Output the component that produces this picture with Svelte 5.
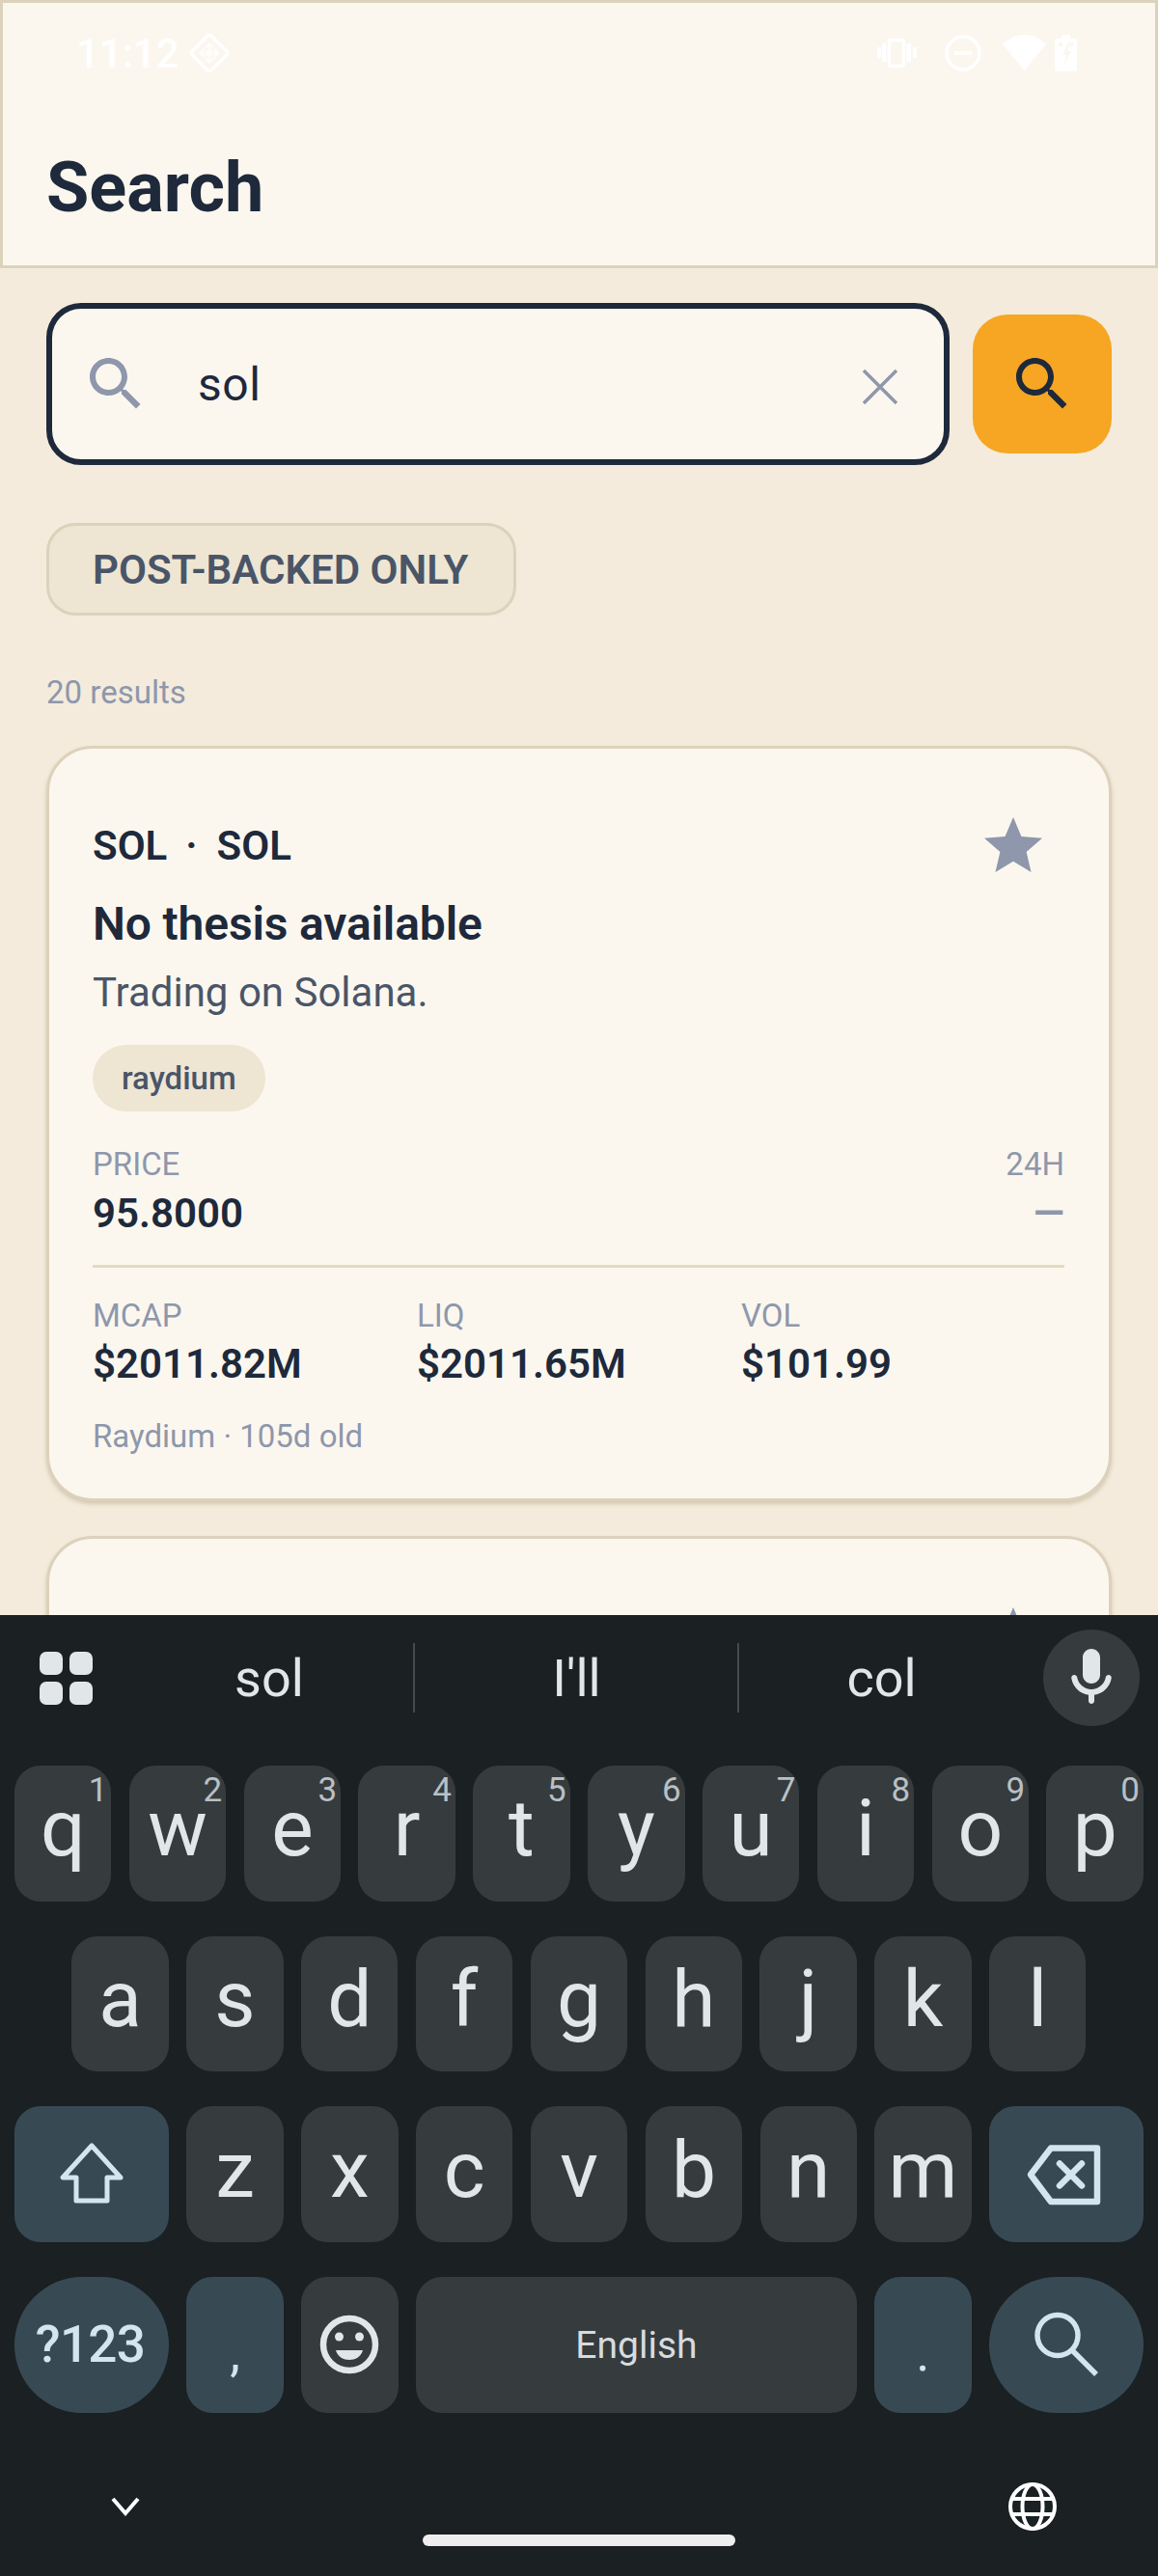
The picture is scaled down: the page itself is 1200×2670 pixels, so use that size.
<script>
  const searchPath = "M15.5 14h-.79l-.28-.27C15.41 12.59 16 11.11 16 9.5 16 5.91 13.09 3 9.5 3S3 5.91 3 9.5 5.91 16 9.5 16c1.61 0 3.09-.59 4.23-1.57l.27.28v.79l5 4.99L20.49 19l-4.99-5zm-6 0C7.01 14 5 11.99 5 9.5S7.01 5 9.5 5 14 7.01 14 9.5 11.99 14 9.5 14z";
  const starPath = "M12 17.27L18.18 21l-1.64-7.03L22 9.24l-7.19-.61L12 2 9.19 8.63 2 9.24l5.46 4.73L5.82 21z";
  const micPath = "M12 14c1.66 0 3-1.34 3-3V5c0-1.66-1.34-3-3-3S9 3.34 9 5v6c0 1.66 1.34 3 3 3zm5.91-3c-.49 0-.9.36-.98.85C16.52 14.2 14.47 16 12 16s-4.52-1.8-4.93-4.15c-.08-.49-.49-.85-.98-.85-.61 0-1.09.54-1 1.14.49 3 2.89 5.35 5.91 5.78V20c0 .55.45 1 1 1s1-.45 1-1v-2.08c3.02-.43 5.42-2.78 5.91-5.78.1-.6-.39-1.14-1-1.14z";

  const topRow = [["q","1"],["w","2"],["e","3"],["r","4"],["t","5"],["y","6"],["u","7"],["i","8"],["o","9"],["p","0"]];
  const midRow = ["a","s","d","f","g","h","j","k","l"];
  const lowRow = ["z","x","c","v","b","n","m"];
  const stats = [["MCAP","$2011.82M"],["LIQ","$2011.65M"],["VOL","$101.99"]];
</script>

<div class="screen">
  <header class="topbar">
    <div class="status">
      <span class="time">11:12</span>
      <svg class="diamond" width="44" height="44" viewBox="0 0 44 44">
        <rect x="8" y="8" width="28" height="28" rx="3" transform="rotate(45 22 22)" fill="none" stroke="#fff" stroke-width="3.5"/>
        <path d="M22 11l5.500 5.500h-11zM16.500 16.500v11l-5.500-5.500zM27.500 16.500l5.500 5.500-5.500 5.500zM16.500 27.500h11L22 33zM22 17l5 5-5 5-5-5z" fill="#fff" opacity=".75"/>
      </svg>
      <span class="status-gap"></span>
      <svg width="42" height="32" viewBox="0 0 42 32">
        <rect x="1" y="10" width="4" height="11" fill="#fff"/>
        <rect x="6" y="6" width="4.500" height="19" fill="#fff"/>
        <rect x="13.500" y="2.500" width="15" height="27" rx="2" fill="none" stroke="#fff" stroke-width="3.500"/>
        <rect x="31.500" y="6" width="4.500" height="19" fill="#fff"/>
        <rect x="38" y="10" width="4" height="11" fill="#fff"/>
      </svg>
      <svg class="dnd" width="38" height="38" viewBox="0 0 38 38">
        <circle cx="19" cy="19" r="17" fill="none" stroke="#fff" stroke-width="3.500"/>
        <rect x="10" y="17" width="18" height="4" fill="#fff"/>
      </svg>
      <svg class="wifi" width="45" height="38" viewBox="0 0 45 38">
        <path d="M0 10C6 4 14 0 22.500 0S39 4 45 10L22.500 37z" fill="#fff"/>
      </svg>
      <svg class="battery" width="23" height="38" viewBox="0 0 23 38">
        <path d="M8 0h8v4h5a2 2 0 0 1 2 2v30a2 2 0 0 1-2 2H2a2 2 0 0 1-2-2V6a2 2 0 0 1 2-2h5z" fill="#fff"/>
        <path d="M4 8h4v4H4zM16 8h3v4h-3zM14 8l-6 13h4l-3 12 8-16h-4l3-9z" fill="#fbf7ef"/>
      </svg>
    </div>
    <h1>Search</h1>
  </header>

  <main class="content">
    <div class="search-row">
      <div class="search-box">
        <svg width="72" height="72" viewBox="0 0 24 24"><path d={searchPath} fill="#8e97ab"/></svg>
        <span class="query">sol</span>
        <svg class="clear" width="48" height="48" viewBox="0 0 48 48">
          <path d="M7 7l34 34M41 7L7 41" stroke="#8e97ab" stroke-width="3.500" fill="none"/>
        </svg>
      </div>
      <button class="go">
        <svg width="72" height="72" viewBox="0 0 24 24"><path d={searchPath} fill="#1e293b"/></svg>
      </button>
    </div>

    <div class="filter">POST-BACKED ONLY</div>
    <p class="count">20 results</p>

    <section class="card">
      <div class="card-head">
        <span class="symbol">SOL<span class="dot">·</span>SOL</span>
        <svg class="star" width="72" height="72" viewBox="0 0 24 24"><path d={starPath} fill="#8e97ab"/></svg>
      </div>
      <h2>No thesis available</h2>
      <p class="desc">Trading on Solana.</p>
      <span class="tag">raydium</span>

      <div class="price-row">
        <div>
          <div class="label">PRICE</div>
          <div class="value">95.8000</div>
        </div>
        <div class="change">
          <div class="label">24H</div>
          <div class="value muted">—</div>
        </div>
      </div>

      <div class="divider"></div>

      <div class="stats">
        {#each stats as [label, value]}
          <div>
            <div class="label">{label}</div>
            <div class="value">{value}</div>
          </div>
        {/each}
      </div>

      <p class="meta">Raydium · 105d old</p>
    </section>

    <section class="card next">
      <div class="card-head">
        <span></span>
        <svg class="star" width="72" height="72" viewBox="0 0 24 24"><path d={starPath} fill="#8e97ab"/></svg>
      </div>
    </section>
  </main>

  <div class="keyboard">
    <div class="strip">
      <div class="apps"><i></i><i></i><i></i><i></i></div>
      <div class="suggestion">sol</div>
      <div class="suggestion sep">I'll</div>
      <div class="suggestion sep">col</div>
      <div class="mic">
        <svg width="72" height="72" viewBox="0 0 24 24"><path d={micPath} fill="#e2e6e9"/></svg>
      </div>
    </div>

    <div class="rows">
      <div class="row">
        {#each topRow as [ch, hint]}
          <div class="key letter">{ch}<sup>{hint}</sup></div>
        {/each}
      </div>
      <div class="row inset">
        {#each midRow as ch}
          <div class="key letter">{ch}</div>
        {/each}
      </div>
      <div class="row">
        <div class="key wide accent">
          <svg width="72" height="72" viewBox="0 0 72 72">
            <path d="M36 6L6 39H20V63H52V39H66Z" fill="none" stroke="#d3e5ef" stroke-width="5" stroke-linejoin="round"/>
          </svg>
        </div>
        {#each lowRow as ch}
          <div class="key letter">{ch}</div>
        {/each}
        <div class="key wide accent">
          <svg width="84" height="72" viewBox="0 0 84 72">
            <path d="M5 36L26 8.500H74V64H26Z" fill="none" stroke="#d3e5ef" stroke-width="6.500" stroke-linejoin="round"/>
            <path d="M35 24.500l23 23M58 24.500l-23 23" fill="none" stroke="#d3e5ef" stroke-width="6.500" stroke-linecap="round"/>
          </svg>
        </div>
      </div>
      <div class="row">
        <div class="key wide accent pill small-label">?123</div>
        <div class="key accent punct">,</div>
        <div class="key">
          <svg width="72" height="72" viewBox="0 0 72 72">
            <circle cx="36" cy="36" r="27" fill="none" stroke="#e2e6e9" stroke-width="6.500"/>
            <circle cx="25.500" cy="28" r="4.500" fill="#e2e6e9"/>
            <circle cx="46.500" cy="28" r="4.500" fill="#e2e6e9"/>
            <path d="M22 42h28c-2 7-8 10-14 10s-12-3-14-10z" fill="#e2e6e9"/>
          </svg>
        </div>
        <div class="key space">English</div>
        <div class="key accent punct">.</div>
        <div class="key wide accent pill">
          <svg width="84" height="84" viewBox="0 0 84 84" fill="none" stroke="#d3e5ef" stroke-width="5.500">
            <circle cx="33" cy="32.500" r="21"/>
            <path d="M48 48l25 25"/>
          </svg>
        </div>
      </div>
    </div>

    <div class="nav">
      <svg width="30" height="20" viewBox="0 0 30 20">
        <path d="M2 2l13 15L28 2" fill="none" stroke="#fff" stroke-width="4"/>
      </svg>
      <div class="home"></div>
      <svg width="52" height="52" viewBox="0 0 52 52" fill="none" stroke="#fff" stroke-width="4">
        <circle cx="26" cy="26" r="23"/>
        <ellipse cx="26" cy="26" rx="10.500" ry="23"/>
        <path d="M4 18h44M4 34h44"/>
      </svg>
    </div>
  </div>
</div>

<style>
  :global(body) {
    margin: 0;
    background: #f4ebdc;
  }

  .screen {
    width: 1200px;
    height: 2670px;
    display: flex;
    flex-direction: column;
    overflow: hidden;
    font-family: Roboto, "Liberation Sans", sans-serif;
    color: #1e293b;
    background: #f4ebdc;
  }

  .topbar {
    height: 278px;
    box-sizing: border-box;
    flex: none;
    background: #fbf7ef;
    border: 3px solid #dcd2bb;
  }

  .status {
    height: 104px;
    display: flex;
    align-items: center;
    padding: 0 81px 0 76px;
  }

  .time {
    font-size: 42px;
    font-weight: 500;
    color: #fff;
  }

  .diamond {
    margin-left: 9px;
  }

  .status-gap {
    flex: 1;
  }

  .dnd {
    margin-left: 29px;
  }

  .wifi {
    margin-left: 22px;
  }

  .battery {
    margin-left: 9px;
  }

  h1 {
    margin: 46px 0 0 45px;
    font-size: 72px;
    line-height: 84px;
    font-weight: 700;
  }

  .content {
    flex: 1;
    min-height: 0;
    overflow: hidden;
    padding: 0 48px;
  }

  .search-row {
    display: flex;
    align-items: center;
    gap: 24px;
    margin-top: 36px;
  }

  .search-box {
    width: 936px;
    height: 168px;
    box-sizing: border-box;
    display: flex;
    align-items: center;
    padding: 0 42px 0 30px;
    background: #fbf7ef;
    border: 6px solid #1e293b;
    border-radius: 36px;
  }

  .query {
    flex: 1;
    margin-left: 49px;
    font-size: 48px;
    letter-spacing: 0.5px;
    color: #1e293b;
  }

  .clear {
    margin-top: 6px;
  }

  .go {
    width: 144px;
    height: 144px;
    display: flex;
    align-items: center;
    justify-content: center;
    padding: 0;
    border: none;
    border-radius: 36px;
    background: #f6a623;
  }

  .filter {
    display: inline-block;
    margin-top: 60px;
    padding: 0 47px 0 45px;
    height: 90px;
    line-height: 92px;
    font-size: 42px;
    font-weight: 600;
    color: #4a5568;
    background: #eee5d3;
    border: 3px solid #dcd2bb;
    border-radius: 30px;
  }

  .count {
    margin: 59px 0 34px;
    font-size: 33px;
    line-height: 42px;
    color: #8e97ab;
  }

  .card {
    padding: 46px 46px 43px 45px;
    background: #fbf7ef;
    border: 3px solid #dcd2bb;
    border-radius: 48px;
    box-shadow: 0 3px 4px rgba(120, 100, 60, 0.25);
  }

  .next {
    margin-top: 36px;
    height: 600px;
  }

  .card-head {
    height: 109px;
    display: flex;
    align-items: center;
    justify-content: space-between;
  }

  .symbol {
    font-size: 42px;
    font-weight: 600;
  }

  .dot {
    margin: 0 20px 0 19px;
  }

  .star {
    margin-right: 17px;
  }

  h2 {
    margin: 0;
    font-size: 48px;
    line-height: 54px;
    font-weight: 600;
    letter-spacing: -0.15px;
  }

  .desc {
    margin: 14px 0 0;
    font-size: 42px;
    line-height: 60px;
    color: #4a5568;
  }

  .tag {
    display: inline-block;
    margin-top: 24px;
    padding: 0 30px;
    height: 69px;
    line-height: 69px;
    border-radius: 35px;
    font-size: 33px;
    font-weight: 500;
    color: #4a5568;
    background: #eee5d3;
  }

  .price-row {
    display: flex;
    justify-content: space-between;
    margin-top: 34px;
  }

  .change {
    text-align: right;
  }

  .label {
    font-size: 33px;
    line-height: 42px;
    color: #8e97ab;
  }

  .value {
    margin-top: 3px;
    font-size: 42px;
    line-height: 54px;
    font-weight: 600;
  }

  .muted {
    color: #8e97ab;
  }

  .divider {
    height: 3px;
    margin-top: 26px;
    background: #e3dbc0;
  }

  .stats {
    display: grid;
    grid-template-columns: repeat(3, 336px);
    margin-top: 29px;
  }

  .stats .value {
    margin-top: 2px;
  }

  .meta {
    margin: 27px 0 0;
    font-size: 33px;
    line-height: 42px;
    color: #8e97ab;
  }

  .keyboard {
    flex: none;
    height: 996px;
    box-sizing: border-box;
    background: #1b2023;
    color: #e2e6e9;
  }

  .strip {
    height: 130px;
    padding-bottom: 26px;
    display: grid;
    grid-template-columns: 129px 300px 336px 296px 139px;
    align-items: center;
  }

  .apps {
    display: grid;
    grid-template-columns: 24px 24px;
    gap: 7px;
    margin-left: 41px;
  }

  .apps i {
    height: 24px;
    border-radius: 7px;
    background: #e2e6e9;
  }

  .suggestion {
    height: 72px;
    line-height: 74px;
    text-align: center;
    font-size: 54px;
  }

  .sep {
    border-left: 2px solid #464b4e;
    margin-left: -1px;
  }

  .mic {
    width: 100px;
    height: 100px;
    justify-self: start;
    margin-left: 20px;
    display: flex;
    align-items: center;
    justify-content: center;
    border-radius: 50%;
    background: #363b3e;
  }

  .rows {
    display: flex;
    flex-direction: column;
    gap: 36px;
    padding: 0 15px;
  }

  .row {
    height: 140.670px;
    display: flex;
    gap: 18.400px;
  }

  .inset {
    padding-left: 59.400px;
  }

  .key {
    position: relative;
    width: 100.440px;
    flex: none;
    display: flex;
    align-items: center;
    justify-content: center;
    border-radius: 27px;
    background: #363b3e;
    color: #e2e6e9;
  }

  .letter {
    padding-bottom: 10px;
    box-sizing: border-box;
    font-size: 82px;
  }

  .key sup {
    position: absolute;
    top: 6px;
    right: 4px;
    font-size: 35px;
    line-height: 40px;
    color: #b9c0c4;
  }

  .wide {
    width: 160px;
  }

  .accent {
    background: #374a54;
    color: #d3e5ef;
  }

  .pill {
    border-radius: 71px;
  }

  .small-label {
    padding-right: 3px;
    box-sizing: border-box;
    font-size: 53px;
    font-weight: 500;
    letter-spacing: -0.7px;
  }

  .punct {
    padding-top: 16px;
    box-sizing: border-box;
    font-size: 54px;
  }

  .space {
    flex: 1;
    padding-top: 2px;
    box-sizing: border-box;
    font-size: 39px;
    color: #d7dbde;
  }

  .nav {
    position: relative;
    display: flex;
    align-items: center;
    justify-content: space-between;
    margin-top: 71px;
    height: 52px;
    padding: 0 104px 0 115px;
  }

  .home {
    position: absolute;
    left: 438px;
    top: 55px;
    width: 324px;
    height: 12px;
    border-radius: 6px;
    background: #eee;
  }
</style>
